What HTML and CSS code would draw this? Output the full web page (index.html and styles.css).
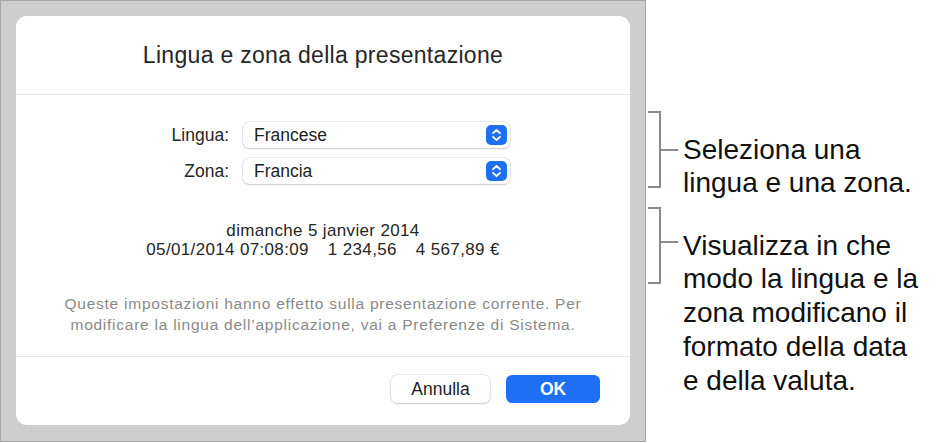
FILE: index.html
```html
<!DOCTYPE html>
<html lang="it">
<head>
<meta charset="utf-8">
<title>Lingua e zona della presentazione</title>
<link rel="stylesheet" href="styles.css">
</head>
<body>
<div class="stage">
  <div class="frame">
    <div class="dialog">
      <div class="header">
        <h1 class="title">Lingua e zona della presentazione</h1>
      </div>
      <div class="form">
        <div class="label">Lingua:</div>
        <div class="popup">
          <span class="popup-text">Francese</span>
          <svg class="stepper" width="21" height="20" viewBox="0 0 21 20"><rect width="21" height="20" rx="5" fill="#1f6ff5"/><path d="M7 8.2 L10.5 5 L14 8.2 M7 11.8 L10.5 15 L14 11.8" fill="none" stroke="#fff" stroke-width="1.8" stroke-linecap="round" stroke-linejoin="round"/></svg>
        </div>
        <div class="label">Zona:</div>
        <div class="popup">
          <span class="popup-text">Francia</span>
          <svg class="stepper" width="21" height="20" viewBox="0 0 21 20"><rect width="21" height="20" rx="5" fill="#1f6ff5"/><path d="M7 8.2 L10.5 5 L14 8.2 M7 11.8 L10.5 15 L14 11.8" fill="none" stroke="#fff" stroke-width="1.8" stroke-linecap="round" stroke-linejoin="round"/></svg>
        </div>
      </div>
      <div class="sample">
        <div class="sample-line">dimanche 5 janvier 2014</div>
        <div class="sample-line sample-values">
          <span class="v-date">05/01/2014</span>
          <span class="v-time">07:08:09</span>
          <span class="v-num">1 234,56</span>
          <span class="v-cur">4 567,89 €</span>
        </div>
      </div>
      <p class="info">Queste impostazioni hanno effetto sulla presentazione corrente. Per<br>modificare la lingua dell’applicazione, vai a Preferenze di Sistema.</p>
      <div class="buttons">
        <button class="btn btn-cancel">Annulla</button>
        <button class="btn btn-ok">OK</button>
      </div>
    </div>
  </div>
  <div class="notes">
    <div class="note note-1">
      <svg class="bracket" width="34" height="80" viewBox="0 0 34 80"><path d="M2 2 H14 V77 H2 M14 40 H32" fill="none" stroke="#8c8c8c" stroke-width="2"/></svg>
      <div class="note-text note-text-1">Seleziona una<br>lingua e una zona.</div>
    </div>
    <div class="note note-2">
      <svg class="bracket" width="34" height="80" viewBox="0 0 34 80"><path d="M2 2 H14 V77 H2 M14 36 H32" fill="none" stroke="#8c8c8c" stroke-width="2"/></svg>
      <div class="note-text note-text-2">Visualizza in che<br>modo la lingua e la<br>zona modificano il<br>formato della data<br>e della valuta.</div>
    </div>
  </div>
</div>
</body>
</html>
```

FILE: styles.css
```css
* { box-sizing: border-box; }
html, body { margin: 0; padding: 0; background: #ffffff; }
body { font-family: "Liberation Sans", Arial, sans-serif; color: #222; }

.stage { display: flex; align-items: flex-start; width: 940px; height: 443px; }

.frame {
  width: 646px;
  height: 442px;
  background: #cecece;
  border: 1px solid #a6a6a6;
  padding: 15px 15px 16px 15px;
  flex: none;
}

.dialog {
  width: 614px;
  height: 409px;
  background: #ffffff;
  border-radius: 11px;
  display: flex;
  flex-direction: column;
}

.header {
  height: 79px;
  padding-top: 25px;
  border-bottom: 1px solid #e6e6e6;
  text-align: center;
}
.title {
  margin: 0;
  font-size: 23px;
  line-height: 28px;
  font-weight: normal;
  letter-spacing: 0.3px;
  color: #262626;
}

.form {
  margin-top: 27px;
  display: grid;
  grid-template-columns: 213px 267px;
  column-gap: 14px;
  row-gap: 10px;
}
.label {
  text-align: right;
  font-size: 17.5px;
  line-height: 26px;
  color: #262626;
}
.popup {
  height: 26px;
  background: #fff;
  border-radius: 6px;
  box-shadow: 0 0 0 0.5px rgba(0,0,0,0.16), 0 1px 2px rgba(0,0,0,0.14);
  display: flex;
  align-items: center;
  justify-content: space-between;
  padding: 0 3px 0 11px;
}
.popup-text { font-size: 17.5px; line-height: 26px; color: #1e1e1e; }
.stepper { display: block; flex: none; }

.sample {
  margin-top: 38px;
  text-align: center;
  font-size: 17px;
  line-height: 18.5px;
  letter-spacing: 0.35px;
  color: #262626;
}
.sample-values { display: flex; justify-content: center; }
.v-date { margin-right: 5px; }
.v-time { margin-right: 19px; }
.v-num { margin-right: 19px; }

.info {
  margin: 34px 0 0 0;
  text-align: center;
  font-size: 15.5px;
  line-height: 21px;
  letter-spacing: 0.75px;
  color: #8a8a8a;
  padding-bottom: 21px;
  border-bottom: 1px solid #e6e6e6;
}

.buttons {
  display: flex;
  justify-content: flex-end;
  gap: 16px;
  padding: 18px 30px 0 0;
}
.btn {
  height: 28px;
  border: none;
  border-radius: 6px;
  font-family: "Liberation Sans", Arial, sans-serif;
  font-size: 17.5px;
  line-height: 28px;
  padding: 0;
  cursor: default;
}
.btn-cancel {
  width: 99px;
  background: #fff;
  color: #1e1e1e;
  box-shadow: 0 0 0 0.5px rgba(0,0,0,0.16), 0 1px 2px rgba(0,0,0,0.14);
}
.btn-ok {
  width: 94px;
  background: #1f6ff5;
  color: #fff;
  font-weight: bold;
}

.notes {
  display: flex;
  flex-direction: column;
  padding-top: 110px;
}
.note { display: flex; align-items: flex-start; }
.note-1 { height: 96px; }
.bracket { display: block; flex: none; }
.note-text {
  margin-left: 3px;
  font-size: 28px;
  color: #111;
  white-space: nowrap;
}
.note-text-1 { line-height: 33px; margin-top: 23px; }
.note-text-2 { line-height: 33.75px; margin-top: 22.5px; }
```
